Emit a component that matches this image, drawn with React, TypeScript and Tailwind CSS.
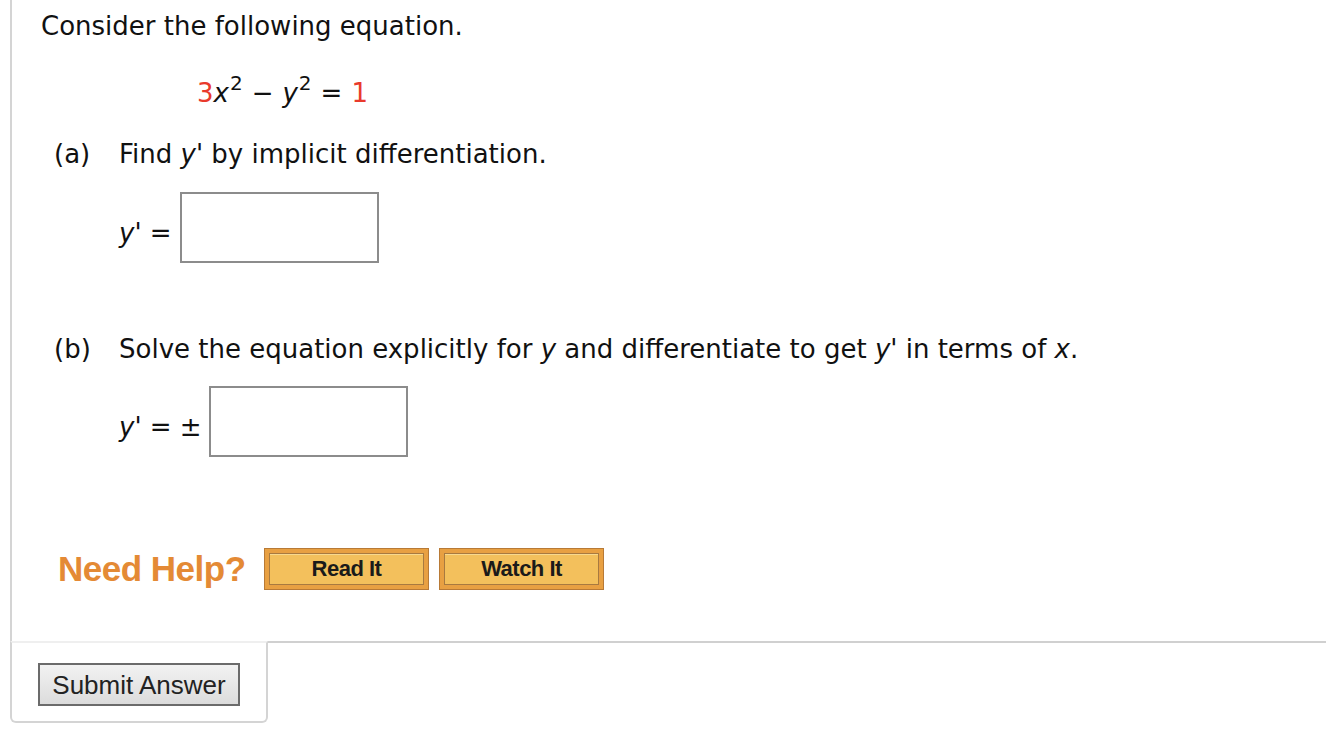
import React from 'react';

const textFont = { fontFamily: '"DejaVu Sans", Verdana, sans-serif' };

const Red: React.FC<{ children: React.ReactNode }> = ({ children }) => (
  <span className="text-[#e93a2c]">{children}</span>
);

const Sup: React.FC<{ children: React.ReactNode }> = ({ children }) => (
  <sup className="text-[20px] relative -top-[12px] ml-[1px]">{children}</sup>
);

const HelpButton: React.FC<{ label: string }> = ({ label }) => (
  <button className="w-[165px] h-[42px] bg-[#e8a042] border border-[#b87a36] p-[4px] cursor-pointer">
    <span className="flex items-center justify-center w-full h-full bg-[#f3c05c] border border-[#a87a40] shadow-[inset_0_1px_0_#f8d98f] font-['Liberation_Sans',Arial,sans-serif] font-bold text-[22px] tracking-[-0.5px] text-[#1a1a1a]">
      {label}
    </span>
  </button>
);

const AnswerBox: React.FC = () => (
  <input
    type="text"
    className="w-[199px] h-[71px] border-2 border-[#8c8c8c] bg-white outline-none"
  />
);

const App: React.FC = () => {
  return (
    <div className="min-h-screen bg-white text-[#111] pl-[10px]" style={textFont}>
      {/* Question panel */}
      <div className="h-[641px] border-l-2 border-[#d4d4d4] pl-[29px] pt-[11px] text-[26px] leading-[30px]">
        <p>Consider the following equation.</p>

        <p className="mt-[35px] pl-[156px] leading-[34px]">
          <Red>3</Red>
          <i>x</i>
          <Sup>2</Sup>
          <span className="mx-[9px]">−</span>
          <i>y</i>
          <Sup>2</Sup>
          <span className="mx-[9px]">=</span>
          <Red>1</Red>
        </p>

        {/* Part (a) */}
        <div className="mt-[29px] flex pl-[13px]">
          <span className="w-[65px]">(a)</span>
          <span>
            Find <i className="italic">y'</i> by implicit differentiation.
          </span>
        </div>
        <div className="mt-[23px] flex items-center pl-[78px]">
          <span className="w-[61px] mt-[10px]">
            <i className="italic">y'</i> =
          </span>
          <AnswerBox />
        </div>

        {/* Part (b) */}
        <div className="mt-[71px] flex pl-[13px]">
          <span className="w-[65px]">(b)</span>
          <span>
            Solve the equation explicitly for <i>y</i> and differentiate to get <i>y'</i> in terms of <i>x</i>.
          </span>
        </div>
        <div className="mt-[22px] flex items-center pl-[78px]">
          <span className="w-[90px] mt-[10px]">
            <i>y'</i> = ±
          </span>
          <AnswerBox />
        </div>

        {/* Help */}
        <div className="mt-[91px] flex items-center pl-[17px]">
          <span className="w-[206px] font-['Liberation_Sans',Arial,sans-serif] font-bold text-[35px] text-[#e48a35] tracking-[-0.5px]">
            Need Help?
          </span>
          <div className="flex gap-[10px]">
            <HelpButton label="Read It" />
            <HelpButton label="Watch It" />
          </div>
        </div>
      </div>

      {/* Submit row */}
      <div className="flex">
        <div className="w-[258px] h-[82px] border-2 border-t-[#efefef] border-[#d4d4d4] rounded-b-[6px] pl-[26px] pt-[20px]">
          <button className="w-[202px] h-[43px] border-2 border-[#6b6b6b] bg-gradient-to-b from-[#f2f2f2] to-[#dcdcdc] font-['Liberation_Sans',Arial,sans-serif] text-[26px] text-[#222] leading-none">
            Submit Answer
          </button>
        </div>
        <div className="flex-1 border-t-2 border-[#d0d0d0]" />
      </div>
    </div>
  );
};

export default App;
